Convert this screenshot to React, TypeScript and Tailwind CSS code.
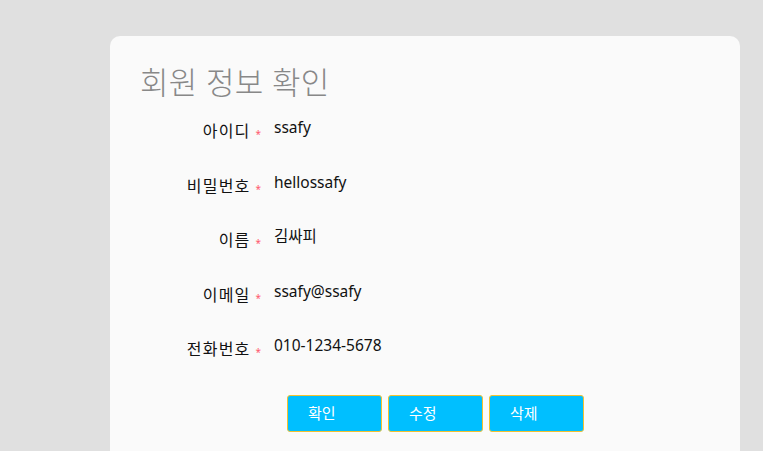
import React from 'react';

const FONT = "font-['Noto_Sans','Noto_Sans_CJK_KR',sans-serif]";

interface Field {
  label: string;
  value: string;
}

const fields: Field[] = [
  { label: '아이디', value: 'ssafy' },
  { label: '비밀번호', value: 'hellossafy' },
  { label: '이름', value: '김싸피' },
  { label: '이메일', value: 'ssafy@ssafy' },
  { label: '전화번호', value: '010-1234-5678' },
];

function InfoRow({ label, value }: Field) {
  return (
    <div className="flex h-[54.5px] items-start">
      <div className="w-[152px] shrink-0 pt-[4px] text-right text-[16px] leading-[24px] text-[#111]">
        <span className="tracking-[1.2px]">{label}</span>
        <span className="ml-[5px] mr-[1px] text-[10px] text-[#ff5a6e] align-[-1px]">*</span>
      </div>
      <div className="ml-[12px] text-[15.5px] leading-[24px] text-[#111]">{value}</div>
    </div>
  );
}

function ActionButton({ children }: { children: React.ReactNode }) {
  return (
    <button className="h-[37px] w-[95px] rounded-[3px] border border-[#f2c230] bg-[#00bfff] pl-[20px] text-left text-[15px] text-white">
      {children}
    </button>
  );
}

export default function App() {
  return (
    <div className={`min-h-[451px] w-full overflow-hidden bg-[#e0e0e0] ${FONT}`}>
      <div className="ml-[110px] mt-[36px] h-[430px] w-[630px] rounded-[10px] bg-[#fafafa] pt-[27px]">
        <h2 className="pl-[30px] text-[31px] font-light leading-[38px] tracking-[0.3px] text-[#888888]">회원 정보 확인</h2>
        <div className="mt-[14px]">
          {fields.map((f) => (
            <InfoRow key={f.label} label={f.label} value={f.value} />
          ))}
        </div>
        <div className="ml-[177px] mt-[7px] flex gap-[6px]">
          <ActionButton>확인</ActionButton>
          <ActionButton>수정</ActionButton>
          <ActionButton>삭제</ActionButton>
        </div>
      </div>
    </div>
  );
}
